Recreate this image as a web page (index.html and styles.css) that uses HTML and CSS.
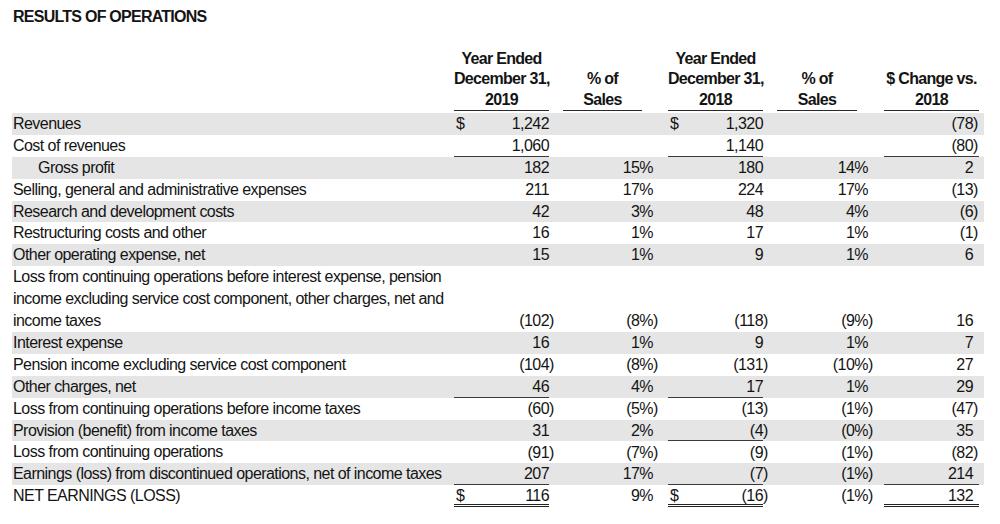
FILE: index.html
```html
<!DOCTYPE html>
<html>
<head>
<meta charset="utf-8">
<link rel="stylesheet" href="styles.css">
</head>
<body>
<div class="page">
  <h1 class="title">RESULTS OF OPERATIONS</h1>

  <div class="row head">
    <div class="h c19">Year Ended<br>December 31,<br>2019</div>
    <div class="h p19">% of<br>Sales</div>
    <div class="h c18">Year Ended<br>December 31,<br>2018</div>
    <div class="h p18">% of<br>Sales</div>
    <div class="h chg">$ Change vs.<br>2018</div>
  </div>

  <div class="row gray">
    <div class="lab">Revenues</div>
    <div class="v c19"><span class="n"><span class="cur">$</span>1,242</span><span class="pr"></span></div>
    <div class="v c18"><span class="n"><span class="cur">$</span>1,320</span><span class="pr"></span></div>
    <div class="v chg"><span class="n">(78</span><span class="pr">)</span></div>
  </div>

  <div class="row">
    <div class="lab">Cost of revenues</div>
    <div class="v c19"><span class="n u">1,060</span><span class="pr"></span></div>
    <div class="v c18"><span class="n u">1,140</span><span class="pr"></span></div>
    <div class="v chg u"><span class="n">(80</span><span class="pr">)</span></div>
  </div>

  <div class="row gray">
    <div class="lab indent">Gross profit</div>
    <div class="v c19"><span class="n">182</span><span class="pr"></span></div>
    <div class="v p19"><span class="n">15%</span><span class="pr"></span></div>
    <div class="v c18"><span class="n">180</span><span class="pr"></span></div>
    <div class="v p18"><span class="n">14%</span><span class="pr"></span></div>
    <div class="v chg"><span class="n">2</span><span class="pr"></span></div>
  </div>

  <div class="row">
    <div class="lab">Selling, general and administrative expenses</div>
    <div class="v c19"><span class="n">211</span><span class="pr"></span></div>
    <div class="v p19"><span class="n">17%</span><span class="pr"></span></div>
    <div class="v c18"><span class="n">224</span><span class="pr"></span></div>
    <div class="v p18"><span class="n">17%</span><span class="pr"></span></div>
    <div class="v chg"><span class="n">(13</span><span class="pr">)</span></div>
  </div>

  <div class="row gray">
    <div class="lab">Research and development costs</div>
    <div class="v c19"><span class="n">42</span><span class="pr"></span></div>
    <div class="v p19"><span class="n">3%</span><span class="pr"></span></div>
    <div class="v c18"><span class="n">48</span><span class="pr"></span></div>
    <div class="v p18"><span class="n">4%</span><span class="pr"></span></div>
    <div class="v chg"><span class="n">(6</span><span class="pr">)</span></div>
  </div>

  <div class="row">
    <div class="lab">Restructuring costs and other</div>
    <div class="v c19"><span class="n">16</span><span class="pr"></span></div>
    <div class="v p19"><span class="n">1%</span><span class="pr"></span></div>
    <div class="v c18"><span class="n">17</span><span class="pr"></span></div>
    <div class="v p18"><span class="n">1%</span><span class="pr"></span></div>
    <div class="v chg"><span class="n">(1</span><span class="pr">)</span></div>
  </div>

  <div class="row gray">
    <div class="lab">Other operating expense, net</div>
    <div class="v c19"><span class="n">15</span><span class="pr"></span></div>
    <div class="v p19"><span class="n">1%</span><span class="pr"></span></div>
    <div class="v c18"><span class="n">9</span><span class="pr"></span></div>
    <div class="v p18"><span class="n">1%</span><span class="pr"></span></div>
    <div class="v chg"><span class="n">6</span><span class="pr"></span></div>
  </div>

  <div class="row">
    <div class="lab">Loss from continuing operations before interest expense, pension<br>income excluding service cost component, other charges, net and<br>income taxes</div>
    <div class="v c19"><span class="n">(102</span><span class="pr">)</span></div>
    <div class="v p19"><span class="n">(8%</span><span class="pr">)</span></div>
    <div class="v c18"><span class="n">(118</span><span class="pr">)</span></div>
    <div class="v p18"><span class="n">(9%</span><span class="pr">)</span></div>
    <div class="v chg"><span class="n">16</span><span class="pr"></span></div>
  </div>

  <div class="row gray">
    <div class="lab">Interest expense</div>
    <div class="v c19"><span class="n">16</span><span class="pr"></span></div>
    <div class="v p19"><span class="n">1%</span><span class="pr"></span></div>
    <div class="v c18"><span class="n">9</span><span class="pr"></span></div>
    <div class="v p18"><span class="n">1%</span><span class="pr"></span></div>
    <div class="v chg"><span class="n">7</span><span class="pr"></span></div>
  </div>

  <div class="row">
    <div class="lab">Pension income excluding service cost component</div>
    <div class="v c19"><span class="n">(104</span><span class="pr">)</span></div>
    <div class="v p19"><span class="n">(8%</span><span class="pr">)</span></div>
    <div class="v c18"><span class="n">(131</span><span class="pr">)</span></div>
    <div class="v p18"><span class="n">(10%</span><span class="pr">)</span></div>
    <div class="v chg"><span class="n">27</span><span class="pr"></span></div>
  </div>

  <div class="row gray">
    <div class="lab">Other charges, net</div>
    <div class="v c19"><span class="n u">46</span><span class="pr"></span></div>
    <div class="v p19"><span class="n">4%</span><span class="pr"></span></div>
    <div class="v c18"><span class="n u">17</span><span class="pr"></span></div>
    <div class="v p18"><span class="n">1%</span><span class="pr"></span></div>
    <div class="v chg"><span class="n">29</span><span class="pr"></span></div>
  </div>

  <div class="row">
    <div class="lab">Loss from continuing operations before income taxes</div>
    <div class="v c19"><span class="n">(60</span><span class="pr">)</span></div>
    <div class="v p19"><span class="n">(5%</span><span class="pr">)</span></div>
    <div class="v c18"><span class="n">(13</span><span class="pr">)</span></div>
    <div class="v p18"><span class="n">(1%</span><span class="pr">)</span></div>
    <div class="v chg"><span class="n">(47</span><span class="pr">)</span></div>
  </div>

  <div class="row gray">
    <div class="lab">Provision (benefit) from income taxes</div>
    <div class="v c19"><span class="n">31</span><span class="pr"></span></div>
    <div class="v p19"><span class="n">2%</span><span class="pr"></span></div>
    <div class="v c18"><span class="n u">(4</span><span class="pr">)</span></div>
    <div class="v p18"><span class="n">(0%</span><span class="pr">)</span></div>
    <div class="v chg"><span class="n">35</span><span class="pr"></span></div>
  </div>

  <div class="row">
    <div class="lab">Loss from continuing operations</div>
    <div class="v c19"><span class="n">(91</span><span class="pr">)</span></div>
    <div class="v p19"><span class="n">(7%</span><span class="pr">)</span></div>
    <div class="v c18"><span class="n">(9</span><span class="pr">)</span></div>
    <div class="v p18"><span class="n">(1%</span><span class="pr">)</span></div>
    <div class="v chg"><span class="n">(82</span><span class="pr">)</span></div>
  </div>

  <div class="row gray">
    <div class="lab">Earnings (loss) from discontinued operations, net of income taxes</div>
    <div class="v c19"><span class="n u">207</span><span class="pr"></span></div>
    <div class="v p19"><span class="n">17%</span><span class="pr"></span></div>
    <div class="v c18"><span class="n u">(7</span><span class="pr">)</span></div>
    <div class="v p18"><span class="n">(1%</span><span class="pr">)</span></div>
    <div class="v chg u"><span class="n">214</span><span class="pr"></span></div>
  </div>

  <div class="row">
    <div class="lab">NET EARNINGS (LOSS)</div>
    <div class="v c19"><span class="n dbl"><span class="cur">$</span>116</span><span class="pr"></span></div>
    <div class="v p19"><span class="n">9%</span><span class="pr"></span></div>
    <div class="v c18"><span class="n dbl"><span class="cur">$</span>(16</span><span class="pr">)</span></div>
    <div class="v p18"><span class="n">(1%</span><span class="pr">)</span></div>
    <div class="v chg dbl"><span class="n">132</span><span class="pr"></span></div>
  </div>
</div>
</body>
</html>
```

FILE: styles.css
```css
html, body {
  margin: 0;
  padding: 0;
  background: #ffffff;
}

body {
  font-family: "Liberation Sans", Arial, sans-serif;
  font-size: 16px;
  letter-spacing: -0.55px;
  color: #141414;
}

.page {
  width: 972px;
  padding: 8px 16px 0 12px;
}

.title {
  margin: 0 0 23px 1px;
  font-size: 16px;
  line-height: 18px;
  letter-spacing: -0.75px;
  font-weight: bold;
}

.row {
  display: grid;
  grid-template-columns: 442px 100px 9px 95px 10px 100px 9px 96px 11px 95px 5px;
  line-height: 21.9px;
}

.row.gray {
  background: #e5e5e5;
}

.head {
  margin-bottom: 2px;
  line-height: 20.3px;
  letter-spacing: -0.7px;
  font-weight: bold;
}

.lab {
  grid-column: 1;
  padding-left: 1px;
  white-space: nowrap;
}

.lab.indent {
  padding-left: 26px;
}

.c19 { grid-column: 2; }
.p19 { grid-column: 4; }
.c18 { grid-column: 6; }
.p18 { grid-column: 8; }
.chg { grid-column: 10; }

.h {
  align-self: end;
  text-align: center;
  white-space: nowrap;
  border-bottom: 1px solid #2a2a2a;
}

.h.c19, .h.c18 {
  margin-right: 5px;
}

.h.p19, .h.p18 {
  margin-right: 16px;
}

.v {
  display: flex;
  align-self: end;
  height: 21.9px;
}

.n {
  flex: 1;
  display: flex;
  justify-content: flex-end;
  box-sizing: border-box;
  height: 100%;
  white-space: nowrap;
}

.cur {
  margin-right: auto;
  padding-left: 2px;
}

.pr {
  width: 5px;
  flex: none;
}

.chg .pr {
  width: 6px;
}

.n.u, .v.u {
  border-bottom: 1px solid #3a3a3a;
}

.n.dbl, .v.dbl {
  border-bottom: 3px double #222;
}

.v.u, .v.dbl {
  box-sizing: border-box;
}
```
